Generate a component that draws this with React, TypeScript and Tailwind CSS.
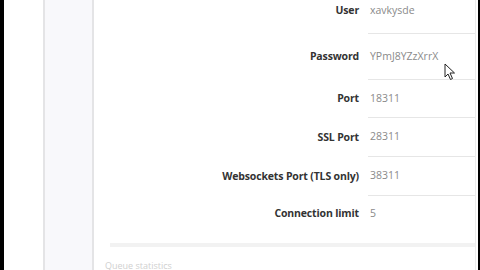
const rows: { label: string; value: string; h: string; sep: boolean }[] = [
  { label: "User", value: "xavkysde", h: "h-[46px]", sep: true },
  { label: "Password", value: "YPmJ8YZzXrrX", h: "h-[46px]", sep: true },
  { label: "Port", value: "18311", h: "h-[38px]", sep: true },
  { label: "SSL Port", value: "28311", h: "h-[39px]", sep: true },
  { label: "Websockets Port (TLS only)", value: "38311", h: "h-[39px]", sep: true },
  { label: "Connection limit", value: "5", h: "h-[36px]", sep: false },
];

function Cursor() {
  return (
    <svg className="absolute left-[444px] top-[63px]" width="12" height="18" viewBox="0 0 12 18">
      <path d="M1 1 L1 14 L4 11 L6.5 16.5 L8.5 15.5 L6 10 L10.5 10 Z" fill="#fff" stroke="#222" strokeWidth="1" strokeLinejoin="round" />
    </svg>
  );
}

export default function App() {
  return (
    <div className="relative flex h-[270px] w-[480px] overflow-hidden bg-white" style={{ fontFamily: '"Open Sans", "Noto Sans", sans-serif' }}>
      <div className="w-[4px] bg-black" />
      <div className="w-[39px] bg-white" />
      <div className="w-[51px] border-x-2 border-[#e4e4e6] bg-[#f8f8fb]" />

      <div className="flex flex-1 flex-col">
        <div className="-mt-[12px] flex flex-col">
          {rows.map((r) => (
            <div key={r.label} className={`flex ${r.h}`}>
              <div className="flex w-[274px] items-center justify-end pr-[9px] text-[10.5px] font-bold tracking-[-0.15px] text-[#333]">
                {r.label}
              </div>
              <div className={`flex flex-1 items-center pl-[2px] text-[10.5px] text-[#8a8a8a] ${r.sep ? "border-b border-[#e6e6e6]" : ""}`}>
                {r.value}
              </div>
            </div>
          ))}
        </div>
        <div className="ml-[16px] mt-[11px] h-[4px] bg-[#f2f2f2]" />
        <div className="ml-[11px] mt-[14px] text-[9px] leading-none text-[#d0d0d0]">Queue statistics</div>
      </div>

      <div className="w-[3px] border-l border-[#ececec] bg-white" />
      <div className="w-[2px] bg-black" />
      <Cursor />
    </div>
  );
}
